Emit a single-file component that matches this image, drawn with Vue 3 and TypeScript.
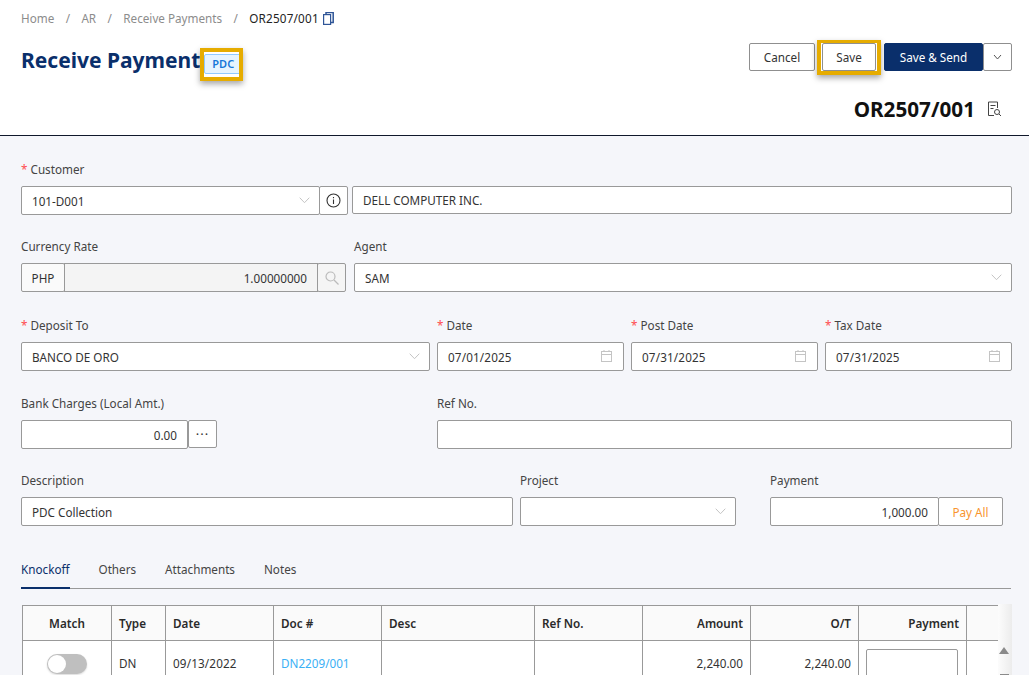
<script setup lang="ts">
const columns = [
  { label: 'Match', width: 89, cls: 'center' },
  { label: 'Type', width: 54, cls: '' },
  { label: 'Date', width: 108, cls: '' },
  { label: 'Doc #', width: 108, cls: '' },
  { label: 'Desc', width: 153, cls: '' },
  { label: 'Ref No.', width: 108, cls: '' },
  { label: 'Amount', width: 108, cls: 'right' },
  { label: 'O/T', width: 108, cls: 'right' },
  { label: 'Payment', width: 108, cls: 'right' },
  { label: '', width: 30, cls: 'last' },
]
</script>

<template>
  <div class="page">
    <header class="head">
      <nav class="crumbs">
        <span class="crumb">Home</span><span class="sep">/</span>
        <span class="crumb">AR</span><span class="sep">/</span>
        <span class="crumb">Receive Payments</span><span class="sep">/</span>
        <span class="current">OR2507/001</span>
        <svg class="copy" width="11" height="13" viewBox="0 0 11 13" fill="none" stroke="#2f5597" stroke-width="1.2">
          <rect x="0.6" y="2.6" width="7" height="9.8" fill="#fff" />
          <path d="M3 2.4V0.6H10.2V10.6H8" stroke-width="1.5" />
        </svg>
      </nav>
      <div class="title-row">
        <div class="title-left">
          <h1>Receive Payment</h1>
          <div class="mark mark-pdc"><span class="badge">PDC</span></div>
        </div>
        <div class="actions">
          <button class="btn cancel">Cancel</button>
          <div class="mark mark-save"><button class="btn save">Save</button></div>
          <button class="btn primary">Save &amp; Send</button>
          <button class="btn more">
            <svg width="9" height="6" viewBox="0 0 9 6" fill="none" stroke="#555" stroke-width="1"><path d="M1 1l3.5 4L8 1" /></svg>
          </button>
        </div>
      </div>
      <div class="doc-row">
        <span class="doc-no">OR2507/001</span>
        <svg width="15" height="16" viewBox="0 0 15 16" fill="none" stroke="#444" stroke-width="1">
          <path d="M10.5 7V1H1.5V14.5H7" />
          <path d="M3.5 4.5H8.5M3.5 7.5H6.5" />
          <circle cx="10" cy="11" r="2.5" />
          <path d="M12 13l2 2" />
        </svg>
      </div>
    </header>

    <main class="form">
      <div class="row">
        <div class="field w-cust">
          <label><i>*</i> Customer</label>
          <div class="joined">
            <div class="input grow">101-D001
              <svg class="chev" width="11" height="7" viewBox="0 0 11 7" fill="none" stroke="#c4c4c4"><path d="M0.7 0.7l4.8 5 4.8-5" /></svg>
            </div>
            <div class="addon a-info">
              <svg width="15" height="15" viewBox="0 0 15 15" fill="none" stroke="#333" stroke-width="1.1">
                <circle cx="7.5" cy="7.5" r="6.5" />
                <path d="M7.5 6.5v4.5M7.5 4v1.2" />
              </svg>
            </div>
          </div>
        </div>
        <div class="field grow name-field">
          <label>&nbsp;</label>
          <div class="input name-input">DELL COMPUTER INC.</div>
        </div>
      </div>

      <div class="row">
        <div class="field w-rate">
          <label>Currency Rate</label>
          <div class="joined">
            <div class="addon a-php">PHP</div>
            <div class="input grow disabled right">1.00000000</div>
            <div class="addon a-search">
              <svg width="14" height="14" viewBox="0 0 14 14" fill="none" stroke="#bbb" stroke-width="1.2">
                <circle cx="5.5" cy="5.5" r="4.5" />
                <path d="M9 9l4.5 4.5" />
              </svg>
            </div>
          </div>
        </div>
        <div class="field grow agent-field">
          <label>Agent</label>
          <div class="input">SAM
            <svg class="chev" width="11" height="7" viewBox="0 0 11 7" fill="none" stroke="#c4c4c4"><path d="M0.7 0.7l4.8 5 4.8-5" /></svg>
          </div>
        </div>
      </div>

      <div class="row">
        <div class="field w-deposit">
          <label><i>*</i> Deposit To</label>
          <div class="input">BANCO DE ORO
            <svg class="chev" width="11" height="7" viewBox="0 0 11 7" fill="none" stroke="#c4c4c4"><path d="M0.7 0.7l4.8 5 4.8-5" /></svg>
          </div>
        </div>
        <div v-for="d in [['Date', '07/01/2025'], ['Post Date', '07/31/2025'], ['Tax Date', '07/31/2025']]" :key="d[0]" class="field w-date">
          <label><i>*</i> {{ d[0] }}</label>
          <div class="input date-text">{{ d[1] }}
            <svg class="cal" width="11" height="12" viewBox="0 0 11 12" fill="none" stroke="#c4c4c4">
              <rect x="0.5" y="1.5" width="10" height="10" />
              <path d="M0.5 4.5h10" />
              <path d="M3 0v2M8 0v2" />
            </svg>
          </div>
        </div>
      </div>

      <div class="row">
        <div class="field w-bank">
          <label>Bank Charges (Local Amt.)</label>
          <div class="joined">
            <div class="input grow right">0.00</div>
            <div class="addon a-dots">···</div>
          </div>
        </div>
        <div class="field grow ref-field">
          <label>Ref No.</label>
          <div class="input"></div>
        </div>
      </div>

      <div class="row last-row">
        <div class="field w-desc">
          <label>Description</label>
          <div class="input">PDC Collection</div>
        </div>
        <div class="field w-project">
          <label>Project</label>
          <div class="input">
            <svg class="chev" width="11" height="7" viewBox="0 0 11 7" fill="none" stroke="#c4c4c4"><path d="M0.7 0.7l4.8 5 4.8-5" /></svg>
          </div>
        </div>
        <div class="field w-pay">
          <label>Payment</label>
          <div class="joined">
            <div class="input grow right">1,000.00</div>
            <div class="addon a-payall">Pay All</div>
          </div>
        </div>
      </div>

      <div class="tabs">
        <span class="tab active">Knockoff</span>
        <span class="tab">Others</span>
        <span class="tab">Attachments</span>
        <span class="tab">Notes</span>
      </div>

      <div class="table-wrap">
        <div class="table">
          <div class="tr th">
            <div v-for="c in columns" :key="c.label" class="cell" :class="c.cls" :style="{ width: c.width + 'px' }">{{ c.label }}</div>
          </div>
          <div class="tr td">
            <div class="cell center" :style="{ width: '89px' }"><span class="toggle"><span class="knob"></span></span></div>
            <div class="cell" :style="{ width: '54px' }">DN</div>
            <div class="cell date-text" :style="{ width: '108px' }">09/13/2022</div>
            <div class="cell link" :style="{ width: '108px' }">DN2209/001</div>
            <div class="cell" :style="{ width: '153px' }"></div>
            <div class="cell" :style="{ width: '108px' }"></div>
            <div class="cell right" :style="{ width: '108px' }">2,240.00</div>
            <div class="cell right" :style="{ width: '108px' }">2,240.00</div>
            <div class="cell pay-cell" :style="{ width: '108px' }"><span class="pay-box"></span></div>
            <div class="cell last" :style="{ width: '30px' }"></div>
          </div>
        </div>
        <div class="scrollbar">
          <svg width="10" height="7" viewBox="0 0 10 7"><path d="M5 0l5 7H0z" fill="#8a8a8a" /></svg>
          <span class="thumb"></span>
        </div>
      </div>
    </main>
  </div>
</template>

<style>
html, body { margin: 0; overflow: hidden; }
</style>

<style scoped>
.page {
  width: 1029px;
  height: 675px;
  overflow: hidden;
  background: #f5f6fa;
  font-family: "Noto Sans", "Open Sans", sans-serif;
  font-size: 11.7px;
  color: #333;
}
.head {
  height: 135px;
  box-sizing: content-box;
  background: #fff;
  border-bottom: 1px solid #10182b;
  padding: 0 17px 0 21px;
}
.crumbs {
  display: flex;
  align-items: center;
  height: 18px;
  padding-top: 9px;
  color: #8c8c8c;
}
.sep { margin: 0 11.4px; color: #8c8c8c; }
.current { color: #222; letter-spacing: .2px; }
.copy { margin-left: 4px; }
.title-row {
  display: flex;
  justify-content: space-between;
  margin-top: 13px;
  height: 38px;
}
.title-left { display: flex; align-items: flex-start; }
h1 {
  margin: 5px 0 0;
  font-size: 21px;
  line-height: 30px;
  font-weight: 700;
  color: #0a2f6b;
}
.mark {
  box-sizing: border-box;
  border: 4px solid #e6ac00;
  box-shadow: 0 3px 6px rgba(0, 0, 0, .35);
  background: #fff;
}
.mark-pdc {
  width: 43px;
  height: 33px;
  margin: 8px 0 0 0;
  padding-top: 2px;
  overflow: hidden;
}
.badge {
  display: block;
  width: 40px;
  height: 20px;
  box-sizing: border-box;
  line-height: 18px;
  padding-left: 7px;
  background: #e6f4ff;
  border: 1px solid #91caff;
  border-radius: 2px;
  color: #1677d8;
  font-size: 11px;
  font-weight: 600;
}
.actions { display: flex; align-items: flex-start; }
.btn {
  font: inherit;
  height: 28px;
  box-sizing: border-box;
  background: #fff;
  border: 1px solid #8f8f8f;
  border-radius: 2px;
  padding: 0;
  color: #333;
}
.cancel { width: 66px; margin-top: 3px; }
.mark-save {
  width: 64px;
  height: 35px;
  margin: 0 3px 0 2px;
  padding: 0 1px;
  border-top-width: 3px;
}
.save { width: 54px; height: 28px; display: block; }
.primary {
  width: 99px;
  margin-top: 3px;
  background: #0a2f6b;
  border-color: #0a2f6b;
  color: #fff;
}
.more { width: 29px; margin-top: 3px; display: flex; align-items: center; justify-content: center; }
.doc-row {
  display: flex;
  justify-content: flex-end;
  align-items: center;
  gap: 12px;
  height: 28px;
  margin-top: 17px;
  padding-right: 10px;
}
.doc-no { font-size: 20.7px; font-weight: 700; color: #111; }

.form { padding: 0 17px 0 21px; }
.row { display: flex; margin-top: 24px; }
.row:nth-child(1) { margin-top: 25px; }
.row:nth-child(2) { margin-top: 23px; }
.row:nth-child(3) { margin-top: 25px; }
.last-row { margin-top: 23px; }
.field { display: flex; flex-direction: column; }
label { height: 25px; line-height: 17px; color: #444; white-space: nowrap; }
label i { font-style: normal; color: #ff4d4f; }
.grow { flex: 1 1 0; min-width: 0; }
.input {
  position: relative;
  height: 29px;
  box-sizing: border-box;
  background: #fff;
  border: 1px solid #999;
  border-radius: 2px;
  padding: 0 10px;
  line-height: 29px;
  color: #333;
  white-space: nowrap;
}
.date-text { letter-spacing: .15px; }
.right { text-align: right; }
.disabled { background: #f4f4f4; border-radius: 0; }
.joined { display: flex; }
.addon {
  height: 29px;
  box-sizing: border-box;
  background: #fff;
  border: 1px solid #999;
  border-radius: 2px;
  display: flex;
  align-items: center;
  justify-content: center;
  flex: none;
}
.chev { position: absolute; right: 9px; top: 10px; }
.cal { position: absolute; right: 11px; top: 7px; }
.w-cust { width: 327px; }
.a-info { width: 29px; margin-left: -1px; }
.name-field { margin-left: 4px; }
.name-input { height: 28px; line-height: 26px; }
.w-rate { width: 325px; }
.a-php { width: 44px; background: #fafafa; margin-right: -1px; }
.a-search { width: 29px; margin-left: -1px; background: #f5f5f5; }
.agent-field { margin-left: 8px; }
.w-deposit { width: 409px; }
.w-date { width: 187px; margin-left: 7px; }
.w-bank { width: 196px; }
.a-dots { width: 29px; height: 28px; letter-spacing: 1px; font-weight: 400; font-size: 13px; }
.ref-field { margin-left: 220px; }
.w-desc { width: 492px; }
.w-project { width: 216px; margin-left: 7px; }
.w-pay { width: 233px; margin-left: 34px; }
.a-payall { width: 65px; margin-left: -1px; color: #f8952c; }

.tabs {
  display: flex;
  height: 31px;
  margin-top: 31px;
  margin-right: 1px;
  border-bottom: 1px solid #999;
  box-sizing: content-box;
  gap: 29px;
}
.tab { line-height: 24px; height: 31px; color: #444; }
.tab.active { color: #0a2f6b; border-bottom: 2px solid #0a2f6b; height: 30px; box-sizing: content-box; }

.table-wrap { display: flex; margin: 16px 0 0 1px; }
.table { width: 975px; flex: none; overflow: hidden; border-left: 1px solid #999; }
.tr { display: flex; border-top: 1px solid #999; }
.cell {
  flex: none;
  box-sizing: border-box;
  border-right: 1px solid #999;
  padding: 0 7px;
  color: #333;
  white-space: nowrap;
}
.cell.last { border-right: 0; }
.th { height: 34px; background: #fafafa; }
.th .cell { line-height: 34px; font-weight: 600; color: #2a2a2a; }
.td { height: 50px; background: #fff; }
.td .cell { line-height: 44px; }
.center { text-align: center; }
.link { color: #3ab0f5; }
.toggle {
  display: inline-block;
  width: 40px;
  height: 20px;
  margin-top: 13px;
  border-radius: 10px;
  background: #bfbfbf;
  position: relative;
  vertical-align: top;
  box-shadow: 0 1px 2px rgba(0, 0, 0, .15);
}
.knob {
  position: absolute;
  left: 1px;
  top: 1px;
  width: 18px;
  height: 18px;
  border-radius: 50%;
  background: #fff;
}
.pay-box {
  display: block;
  width: 92px;
  height: 40px;
  margin-top: 8px;
  box-sizing: border-box;
  background: #fff;
  border: 1px solid #999;
  border-radius: 2px;
}
.scrollbar {
  width: 15px;
  height: 80px;
  margin-top: -1px;
  background: linear-gradient(90deg, #fcfcfc, #ececec);
  display: flex;
  flex-direction: column;
  align-items: center;
  padding: 43px 2px 0 0;
  box-sizing: border-box;
}
.thumb {
  display: block;
  flex: none;
  width: 9px;
  height: 2px;
  margin-top: 20px;
  background: #8a8a8a;
}
</style>
